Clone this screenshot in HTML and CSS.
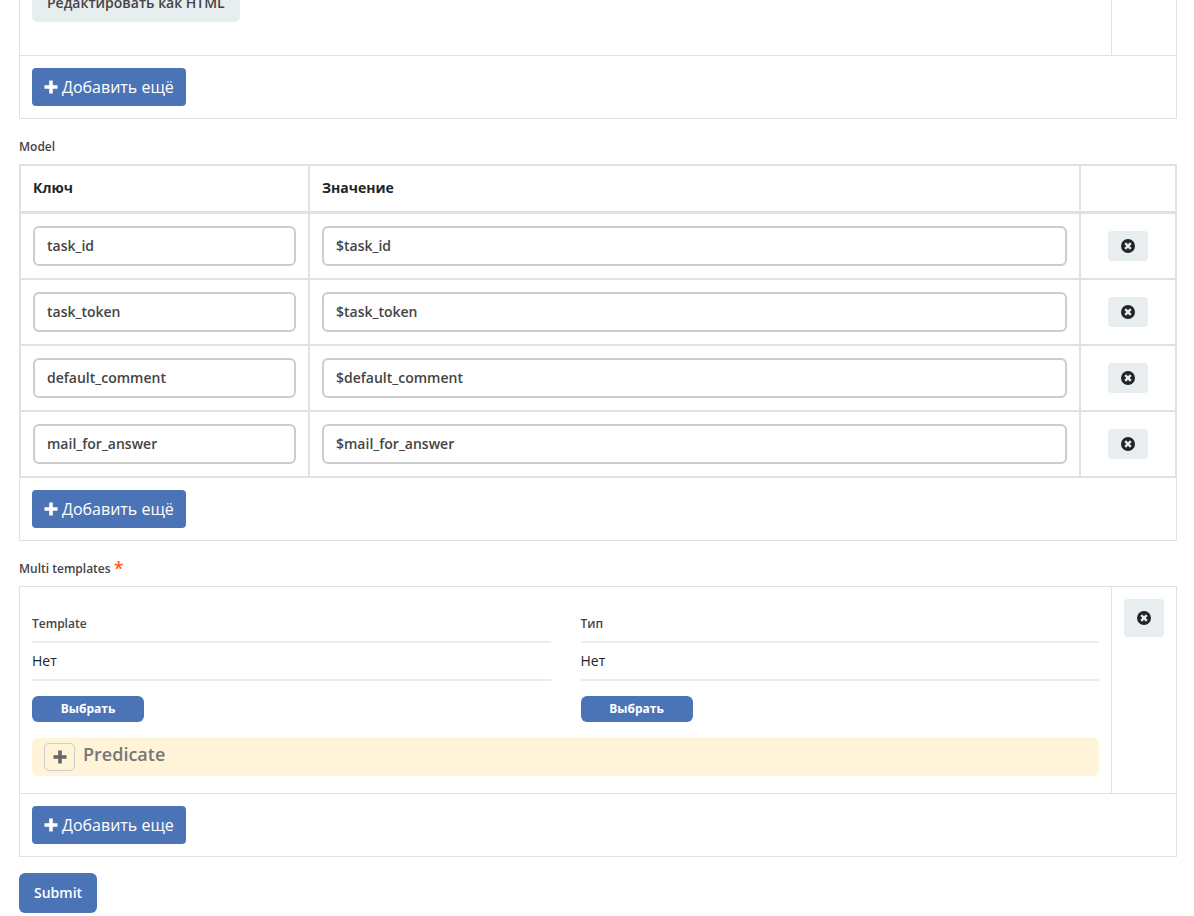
FILE: index.html
```html
<!DOCTYPE html>
<html lang="ru">
<head>
    <meta charset="UTF-8">
    <title>Multi templates</title>
    <link rel="stylesheet" href="styles.css">
</head>
<body>
    <svg class="sprite" aria-hidden="true">
        <symbol id="plus" viewBox="0 0 14 14">
            <path d="M5.2 0.5h3.6v4.7h4.7v3.6H8.8v4.7H5.2V8.8H0.5V5.2h4.7z"/>
        </symbol>
        <symbol id="remove" viewBox="0 0 14 14">
            <circle cx="7" cy="7" r="7"/>
            <path d="M4.2 4.2l5.6 5.6M9.8 4.2l-5.6 5.6" stroke="#e8edef" stroke-width="2.4"/>
        </symbol>
    </svg>

    <form class="form">
        <div class="panel panel-first">
            <div class="panel-row">
                <div class="panel-main">
                    <button type="button" class="btn-html">Редактировать как HTML</button>
                </div>
                <div class="panel-side"></div>
            </div>
            <div class="panel-footer">
                <button type="button" class="btn-add"><svg class="icon"><use href="#plus"/></svg>Добавить ещё</button>
            </div>
        </div>

        <h2 class="title">Model</h2>
        <div class="panel panel-table">
            <table class="model">
                <thead>
                    <tr>
                        <th class="col-key">Ключ</th>
                        <th>Значение</th>
                        <th class="col-remove"></th>
                    </tr>
                </thead>
                <tbody>
                    <tr>
                        <td><input type="text" aria-label="Ключ" value="task_id"></td>
                        <td><input type="text" aria-label="Значение" value="$task_id"></td>
                        <td class="col-remove"><button type="button" class="btn-remove small" aria-label="Удалить"><svg class="icon"><use href="#remove"/></svg></button></td>
                    </tr>
                    <tr>
                        <td><input type="text" aria-label="Ключ" value="task_token"></td>
                        <td><input type="text" aria-label="Значение" value="$task_token"></td>
                        <td class="col-remove"><button type="button" class="btn-remove small" aria-label="Удалить"><svg class="icon"><use href="#remove"/></svg></button></td>
                    </tr>
                    <tr>
                        <td><input type="text" aria-label="Ключ" value="default_comment"></td>
                        <td><input type="text" aria-label="Значение" value="$default_comment"></td>
                        <td class="col-remove"><button type="button" class="btn-remove small" aria-label="Удалить"><svg class="icon"><use href="#remove"/></svg></button></td>
                    </tr>
                    <tr>
                        <td><input type="text" aria-label="Ключ" value="mail_for_answer"></td>
                        <td><input type="text" aria-label="Значение" value="$mail_for_answer"></td>
                        <td class="col-remove"><button type="button" class="btn-remove small" aria-label="Удалить"><svg class="icon"><use href="#remove"/></svg></button></td>
                    </tr>
                </tbody>
            </table>
            <div class="panel-footer">
                <button type="button" class="btn-add"><svg class="icon"><use href="#plus"/></svg>Добавить ещё</button>
            </div>
        </div>

        <h2 class="title">Multi templates <span class="required">*</span></h2>
        <div class="panel">
            <div class="panel-row">
                <div class="panel-main">
                    <div class="fields">
                        <div class="field">
                            <div class="field-label">Template</div>
                            <div class="field-value">Нет</div>
                            <button type="button" class="btn-select">Выбрать</button>
                        </div>
                        <div class="field">
                            <div class="field-label">Тип</div>
                            <div class="field-value">Нет</div>
                            <button type="button" class="btn-select">Выбрать</button>
                        </div>
                    </div>
                    <div class="predicate">
                        <button type="button" class="btn-expand" aria-label="Развернуть"><svg class="icon"><use href="#plus"/></svg></button>
                        <span class="predicate-title">Predicate</span>
                    </div>
                </div>
                <div class="panel-side">
                    <button type="button" class="btn-remove" aria-label="Удалить"><svg class="icon"><use href="#remove"/></svg></button>
                </div>
            </div>
            <div class="panel-footer">
                <button type="button" class="btn-add"><svg class="icon"><use href="#plus"/></svg>Добавить еще</button>
            </div>
        </div>

        <button type="submit" class="btn-submit">Submit</button>
    </form>
</body>
</html>
```
FILE: styles.css
```css
* {
    box-sizing: border-box;
}
body {
    margin: 0;
    background: #fff;
    color: #212529;
    font-family: "Open Sans", "Noto Sans", sans-serif;
    font-size: 14px;
    line-height: 20px;
}
button, input {
    font-family: inherit;
}
button {
    display: inline-flex;
    align-items: center;
    justify-content: center;
    border: 0;
    padding: 0;
    cursor: pointer;
}
.sprite {
    display: none;
}
.icon {
    width: 14px;
    height: 14px;
    fill: currentColor;
}
.form {
    display: flow-root;
    padding: 0 17px 0 19px;
}

/* panels */
.panel {
    border: 1px solid #dee2e6;
}
.panel-first {
    margin-top: -31px;
}
.panel-row {
    display: flex;
    border-bottom: 1px solid #dee2e6;
}
.panel-main {
    flex: 1;
    padding: 12px;
}
.panel-first .panel-main {
    padding-bottom: 33px;
}
.panel-side {
    width: 65px;
    padding: 12px;
    border-left: 1px solid #dee2e6;
}
.panel-footer {
    display: flex;
    padding: 12px;
}
.title {
    margin: 18px 0 7px;
    color: #444;
    font-size: 12px;
    font-weight: 600;
    line-height: 20px;
}
.required {
    color: #ff5722;
    font-size: 18px;
    line-height: 1px;
    vertical-align: -2px;
}

/* buttons */
.btn-html {
    height: 40px;
    padding: 0 15px;
    border-radius: 6px;
    background: #e8edef;
    color: #444;
    font-size: 14px;
    font-weight: 600;
}
.btn-add {
    gap: 4px;
    height: 38px;
    padding: 0 12px;
    border-radius: 4px;
    background: #4b74b7;
    color: #fff;
    font-size: 16px;
}
.btn-remove {
    width: 40px;
    height: 38px;
    border-radius: 4px;
    background: #e8edef;
    color: #212529;
}
.btn-remove.small {
    height: 30px;
    vertical-align: middle;
}
.btn-select {
    width: 112px;
    height: 26px;
    border-radius: 6px;
    background: #4b74b7;
    color: #fff;
    font-size: 12px;
    font-weight: 700;
}
.btn-submit {
    height: 40px;
    margin-top: 16px;
    padding: 0 15px;
    border-radius: 6px;
    background: #4b74b7;
    color: #fff;
    font-size: 14px;
    font-weight: 600;
}

/* model table */
.panel-table {
    border-top: 0;
}
.model {
    width: calc(100% + 2px);
    margin: 0 -1px;
    border-collapse: collapse;
    table-layout: fixed;
}
.model th, .model td {
    padding: 12px;
    border: 2px solid #dee2e6;
    text-align: left;
}
.model th {
    height: 47px;
    border-bottom-width: 3px;
    font-weight: 700;
}
.model .col-key {
    width: 25%;
}
.model .col-remove {
    width: 96px;
    text-align: center;
}
.model td {
    line-height: 0;
}
.model input {
    width: 100%;
    height: 40px;
    padding: 0 12px;
    border: 2px solid #ccc;
    border-radius: 6px;
    background: #fff;
    color: #444;
    font-size: 14px;
    font-weight: 600;
}

/* template fields */
.fields {
    display: flex;
    gap: 30px;
    padding-top: 15px;
}
.field {
    flex: 1;
}
.field-label {
    padding-bottom: 7px;
    color: #444;
    font-size: 12px;
    font-weight: 600;
}
.field-value {
    margin-bottom: 15px;
    padding: 8px 0;
    border: solid #e8edef;
    border-width: 2px 0;
}
.predicate {
    display: flex;
    gap: 8px;
    margin: 16px 0 5px;
    padding: 5px 12px;
    border-radius: 6px;
    background: #fff4d8;
}
.btn-expand {
    width: 31px;
    height: 28px;
    border: 1px solid #ccc;
    border-radius: 5px;
    background: transparent;
    color: #666;
}
.predicate-title {
    color: #777;
    font-size: 18px;
    font-weight: 600;
    line-height: 22px;
}
```
